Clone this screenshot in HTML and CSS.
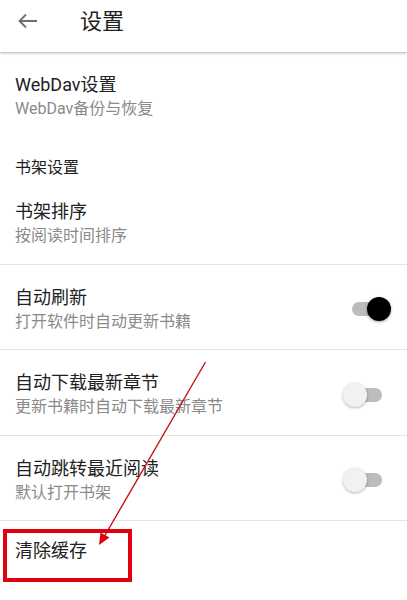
FILE: index.html
```html
<!DOCTYPE html>
<html lang="zh-CN">
<head>
<meta charset="utf-8">
<title>设置</title>
<link rel="stylesheet" href="styles.css">
</head>
<body>
<div class="page">
  <header class="toolbar">
    <svg class="back" width="24" height="24" viewBox="0 0 24 24" aria-hidden="true">
      <path d="M21 12H3.5M10 5.5L3.5 12L10 18.5" fill="none" stroke="#6e6e6e" stroke-width="1.8" stroke-linecap="butt" stroke-linejoin="miter"/>
    </svg>
    <h1 class="title">设置</h1>
  </header>

  <main class="list">
    <div class="row first">
      <div class="text">
        <div class="item-title">WebDav设置</div>
        <div class="item-sub">WebDav备份与恢复</div>
      </div>
    </div>

    <div class="category">书架设置</div>

    <div class="row bordered tight">
      <div class="text">
        <div class="item-title">书架排序</div>
        <div class="item-sub">按阅读时间排序</div>
      </div>
    </div>

    <div class="row bordered">
      <div class="text">
        <div class="item-title">自动刷新</div>
        <div class="item-sub">打开软件时自动更新书籍</div>
      </div>
      <div class="switch on"><span class="track"></span><span class="thumb"></span></div>
    </div>

    <div class="row bordered">
      <div class="text">
        <div class="item-title">自动下载最新章节</div>
        <div class="item-sub">更新书籍时自动下载最新章节</div>
      </div>
      <div class="switch"><span class="track"></span><span class="thumb"></span></div>
    </div>

    <div class="row bordered">
      <div class="text">
        <div class="item-title">自动跳转最近阅读</div>
        <div class="item-sub">默认打开书架</div>
      </div>
      <div class="switch"><span class="track"></span><span class="thumb"></span></div>
    </div>

    <div class="row single">
      <div class="text">
        <div class="item-title">清除缓存</div>
      </div>
    </div>
  </main>

  <div class="highlight-box"></div>
  <svg class="annotation" width="407" height="600" viewBox="0 0 407 600" aria-hidden="true">
    <line x1="205.5" y1="362" x2="104" y2="537" stroke="#c4121a" stroke-width="1.4"/>
    <polygon points="99,545 100.5,532.5 109.5,537.5" fill="#e00010"/>
  </svg>
</div>
</body>
</html>
```

FILE: styles.css
```css
* {
  box-sizing: border-box;
}

html, body {
  margin: 0;
  padding: 0;
  background: #ffffff;
}

body {
  font-family: "Roboto", "Noto Sans CJK SC", "Noto Sans", sans-serif;
  color: #212121;
}

.page {
  position: relative;
  width: 407px;
  height: 600px;
  overflow: hidden;
  background: #ffffff;
}

.toolbar {
  position: relative;
  z-index: 1;
  height: 52px;
  display: flex;
  align-items: center;
  padding-left: 16px;
  background: #ffffff;
  box-shadow: 0 1px 2px rgba(0, 0, 0, 0.22), 0 2px 3px rgba(0, 0, 0, 0.08);
}

.back {
  display: block;
  margin-top: -10px;
}

.title {
  margin: -9px 0 0 40px;
  font-size: 22px;
  font-weight: 400;
  line-height: 30px;
  color: #1e1e1e;
}

.list {
  display: flex;
  flex-direction: column;
}

.row {
  display: flex;
  align-items: center;
  padding: 21px 16px 16.5px 15px;
}

.row.first {
  padding-bottom: 16px;
}

.row.bordered {
  border-bottom: 1px solid #e4e4e4;
}

.row.single {
  padding-top: 18px;
}

.text {
  flex: 1;
  min-width: 0;
}

.item-title {
  font-size: 18px;
  line-height: 24px;
  color: #212121;
}

.item-sub {
  margin-top: 1px;
  font-size: 16px;
  line-height: 22px;
  color: #8a8a8a;
}

.category {
  padding: 21px 15px 0;
  font-size: 16px;
  line-height: 22px;
  color: #1f1f1f;
}

.switch {
  position: relative;
  width: 48px;
  height: 24px;
  flex: none;
  margin-right: 0;
}

.switch .track {
  position: absolute;
  left: 9px;
  top: 5px;
  width: 30px;
  height: 14px;
  border-radius: 7px;
  background: #bcbcbc;
}

.switch .thumb {
  position: absolute;
  left: 0;
  top: 0;
  width: 24px;
  height: 24px;
  border-radius: 50%;
  background: #f1f1f1;
  box-shadow: 0 1px 3px rgba(0, 0, 0, 0.3);
}

.switch.on .thumb {
  left: 24px;
  background: #000000;
  box-shadow: 0 1px 3px rgba(0, 0, 0, 0.35);
}

.highlight-box {
  position: absolute;
  left: 3px;
  top: 529px;
  width: 129px;
  height: 53px;
  border: 4px solid #e3000f;
  pointer-events: none;
}

.annotation {
  position: absolute;
  left: 0;
  top: 0;
  pointer-events: none;
}
```
